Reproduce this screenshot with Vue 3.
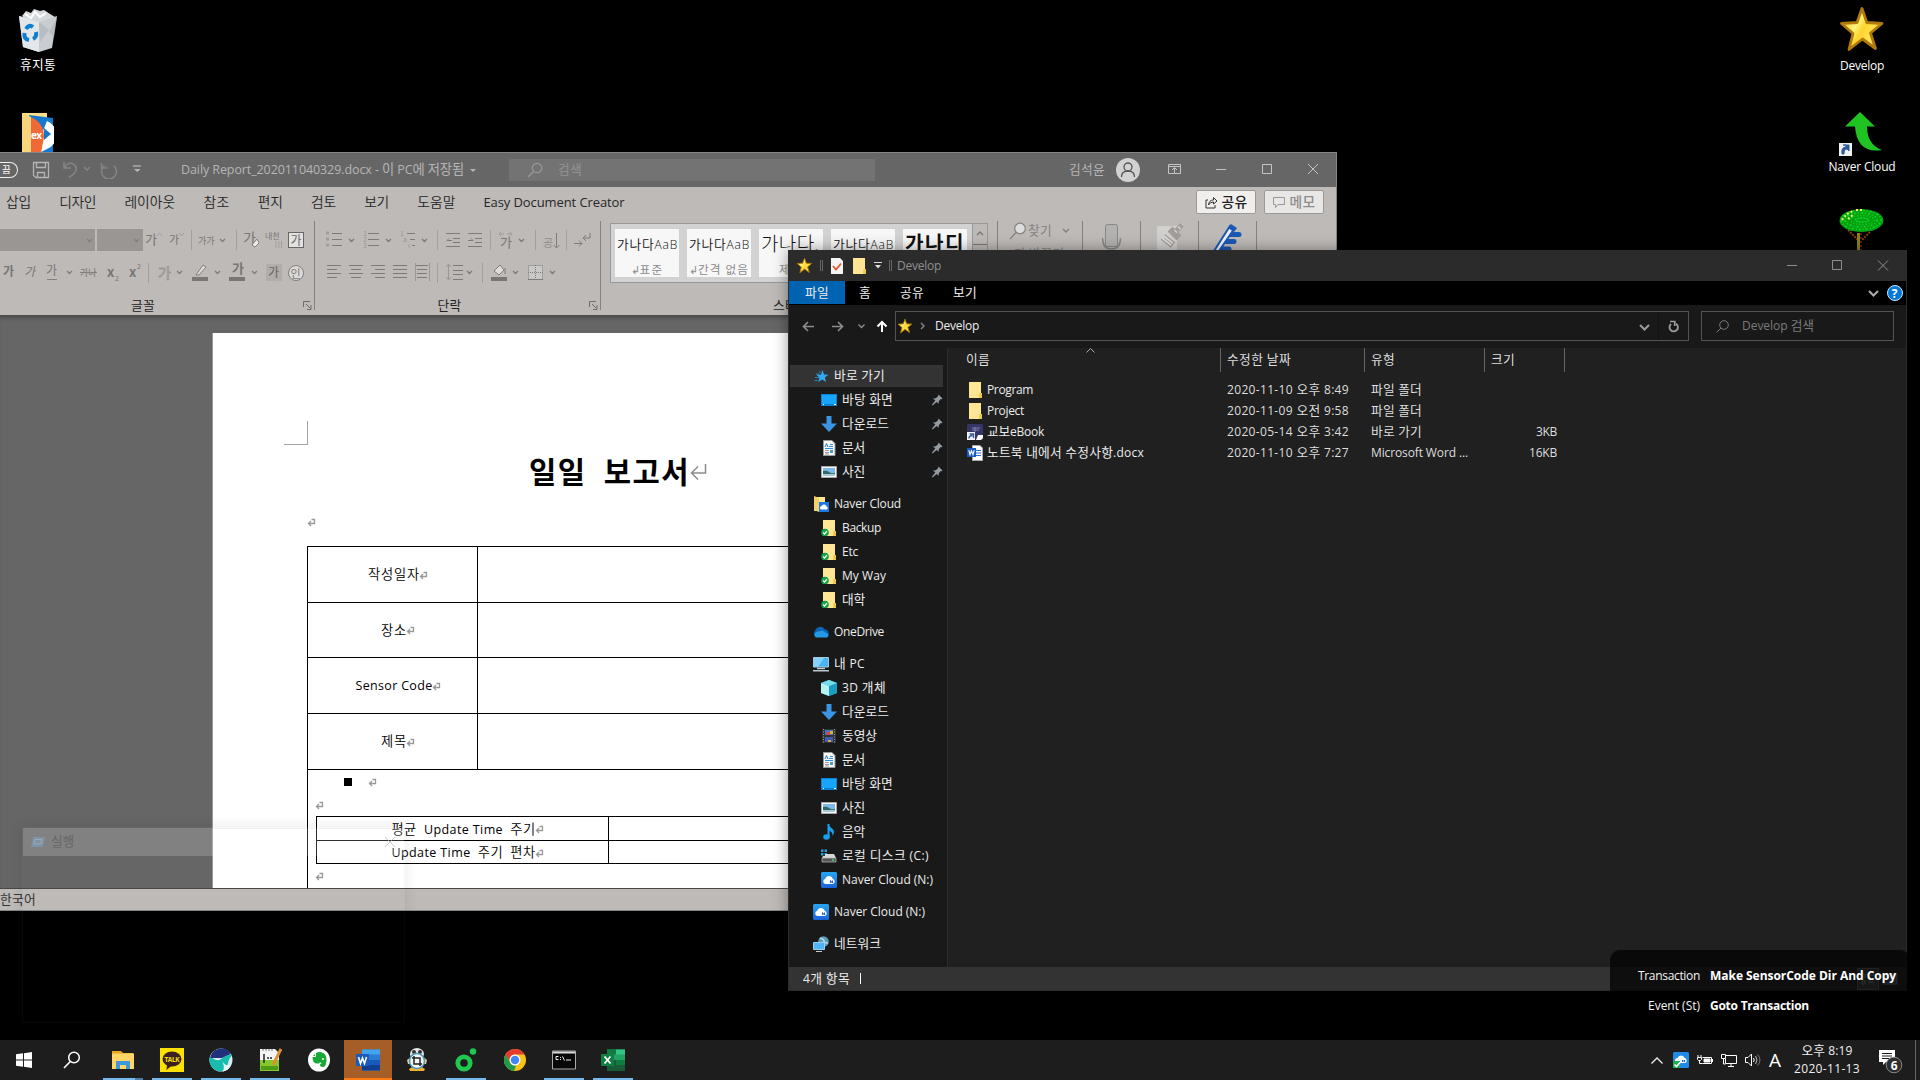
<script setup>
import { h, ref, onMounted, defineComponent } from 'vue'

// Text run: Hangul and Latin parts get their own size; the tracking is fitted to width w.
const T = defineComponent({
  props: { t: String, w: Number },
  setup(p) {
    const el = ref(null)
    onMounted(() => {
      if (!p.w) return
      const now = el.value.getBoundingClientRect().width
      el.value.style.letterSpacing = (p.w - now) / p.t.length + 'px'
    })
    return () => h('span', { ref: el, class: 't' },
      p.t.split(/([가-힣]+)/).filter(Boolean).map(s => /[가-힣]/.test(s) ? h('span', { class: 'ko' }, s) : s))
  }
})

const art = {
  star: [48, '<defs><linearGradient id="sg" x1="0" x2="1" y2=".6"><stop offset="0" stop-color="#ffc814"/><stop offset=".45" stop-color="#fff27a"/><stop offset=".6" stop-color="#ffd52e"/><stop offset="1" stop-color="#fff06a"/></linearGradient></defs><path d="M24 3.500 28.800 17.500 44 18.500 32.500 28 37.500 43.500 24.500 34 11 44.500 15 28.500 3.500 18.500 19 17.500Z" fill="url(#sg)" stroke="#b07a0a" stroke-width="2.800" stroke-linejoin="round"/>'],
  folder: [16, '<path d="M2 0h12v16H2z" fill="#ffe08a"/><path d="M2 0h12v11h-1.500v5H2z" fill="#ffe694"/><path d="M12.500 11H15v5h-3z" fill="#f0c64c"/>'],
  sfolder: [16, '<path d="M2 0h12v16H2z" fill="#ffe694"/><path d="M12.500 11H15v5h-3z" fill="#f0c64c"/><circle cx="4" cy="12.500" r="3.800" fill="#14a04a"/><path d="M2.200 12.500 3.600 14 6 11.200" stroke="#fff" stroke-width="1.300" fill="none"/>'],
  quick: [16, '<path d="M9.500 2l1.500 4.500 4.500.2-3.600 2.900 1.200 4.400-3.900-2.400-4 2.400 1.300-4.300L3.500 6.700 8 6.500z" fill="#34a8f4"/><path d="M1.500 12.500h3M2 9.500h4M3 6h3M6 4h2" stroke="#2088d0"/>'],
  desk: [16, '<path d="M0 2h16v12H0z" fill="#0a84d8"/><path d="M1 3h14v9H1z" fill="#18a4ff"/><path d="M2 12.500h1M13 12.500h2" stroke="#fff"/>'],
  down: [16, '<path d="M5.500 0h5v7.500H16L8 16 0 7.500h5.500z" fill="#3a96e4"/>'],
  doc: [16, '<path d="M2.500.5h8.500l3 3v12H2.500z" fill="#f8f8f8" stroke="#9a9a9a"/><path d="M9 4.500h3M8 6.500h4M4 8.500h8" stroke="#2b8bd8"/><path d="M4 7l1.500-3.500L7 7" stroke="#1f78c0" fill="none"/><path d="M4 10.500h4M4 12.500h4M4 14h4" stroke="#999"/><path d="M9 10h3v3H9z" fill="#4d9ab8"/>'],
  pic: [16, '<path d="M.5 2.500h15v11H.5z" fill="#f6f6f6" stroke="#a8a8a8"/><path d="M2 4h12v8H2z" fill="#7fb8e8"/><path d="M2 7q4-1 6 1t6 1v3H2z" fill="#2d6a6c"/><path d="M2 10h12v2H2z" fill="#a8c8d8"/>'],
  ncf: [16, '<path d="M1 1h11v14H1z" fill="#ffe694"/><path d="M1 0l5 2v14l-5-2z" fill="#f4d06c"/><path d="M6 6h10v10H6z" fill="#1b78e0"/><path d="M8 13.500a1.800 1.800 0 0 1 .5-3.400 2.600 2.600 0 0 1 5 .4 1.600 1.600 0 0 1 .3 3z" fill="#fff"/>'],
  nc: [16, '<defs><linearGradient id="ng" x2="0" y2="1"><stop stop-color="#28a6f0"/><stop offset="1" stop-color="#1c62d8"/></linearGradient></defs><rect width="16" height="16" rx="1.500" fill="url(#ng)"/><path d="M4.500 12a2.700 2.700 0 0 1-.2-5.300 3.800 3.800 0 0 1 7.300 0A2.700 2.700 0 0 1 11.500 12z" fill="#fff"/><path d="M9.500 11V8.500l2 2.500V8.500" stroke="#1c62d8" fill="none"/>'],
  onedrive: [16, '<path d="M3.500 13A3.500 3.500 0 0 1 2 7 5.500 5.500 0 0 1 12 5.500 4 4 0 0 1 13.500 13z" fill="#0c63b8"/><path d="M3 13.500a3.200 3.200 0 0 1 .5-5.500L9 6.500l6 3.500a2.300 2.300 0 0 1-1.300 3.500z" fill="#2499e4"/>'],
  pc: [16, '<path d="M.5 1.500h15v9.500H.5z" fill="#4ab2f8" stroke="#a4c8dc"/><path d="M1 2h10L5 11H1z" fill="#84d0ff"/><path d="M4 12.500h8M0 14.800h16" stroke="#b8c8d0" stroke-width="1.400"/>'],
  cube: [16, '<path d="M8 0l8 3v10l-8 3-8-3V3z" fill="#35bcd8"/><path d="M0 3l8 3v10l-8-3z" fill="#b6f2f4"/><path d="M8 6l8-3v10l-8 3z" fill="#1a9dc0"/><path d="M8 0l8 3-8 3-8-3z" fill="#74dcec"/>'],
  film: [16, '<path d="M1 1h14v14H1z" fill="#333"/><path d="M2.500 1v14M13.500 1v14" stroke="#999" stroke-dasharray="1 1.500"/><path d="M4 2h8v5H4z" fill="#4a70c8"/><path d="M4 9h8v5H4z" fill="#3c5cb4"/><path d="M6 4h3v3H6z" fill="#d84830"/><path d="M9 3h3v3H9z" fill="#d8b030"/><path d="M7 12h3v2H7z" fill="#e0a040"/>'],
  music: [16, '<ellipse cx="5.500" cy="13" rx="3.300" ry="2.700" fill="#18a0f0"/><path d="M7.500 0v13" stroke="#18a0f0" stroke-width="2"/><path d="M8 0c0 4 5 4 5 8q0 2-1.500 4 .5-4-3.500-5.500z" fill="#18a0f0"/>'],
  disk: [16, '<path d="M0 1.500h2.500v2.500H0zM3.500 1.500H6v2.500H3.500zM0 5h2.500v2.500H0zM3.500 5H6v2.500H3.500z" fill="#28a0d8"/><path d="M4 6h9l2 4H1l1-2h2z" fill="#d8d8d8"/><path d="M1 10h14v4H1z" fill="#555" stroke="#bbb" stroke-width=".7"/><path d="M11 12h2" stroke="#30e060" stroke-width="1.500"/>'],
  net: [16, '<circle cx="10.500" cy="5.500" r="5.300" fill="#5c9cb8"/><path d="M7 2q4 1 4 3t4 2" stroke="#b8dcec" stroke-width="1.500" fill="none"/><path d="M.5 6.500h11v7H.5z" fill="#50b4f8" stroke="#9cd0f0"/><path d="M3 15.500h6" stroke="#c8d0d4"/>'],
  pin: [12, '<path d="M7.500 .5 11.500 4.500 10.500 5.200 9.800 5 7.800 7.200 7.600 9.800 5.600 8 1.500 11.500 .8 10.800 4.300 6.600 2 4.500 4.800 4.200 7 2.200z" fill="#929ba2"/>'],
  ebook: [16, '<rect width="16" height="16" rx="1.500" fill="#353566"/><path d="M5 4h8M5 6h7M8 3v5" stroke="#8d90b8" stroke-width=".8"/><path d="M11 11h5v3l-2 2h-5z" fill="#fff"/><path d="M0 8h8v8H0z" fill="#f4f4f8"/><path d="M2 14.500q0-3 3.500-3M2.500 10h4v4" stroke="#335a9c" stroke-width="1.400" fill="none"/>'],
  docx: [16, '<path d="M5.500.5H13l2.500 2.500v12.500h-10z" fill="#fff" stroke="#aaa"/><path d="M9 5.500h5M9 8h5M9 10.500h5" stroke="#2b6cd0" stroke-width="1.200"/><path d="M0 3h9v9H0z" fill="#185abd"/><path d="M1.800 5.200l1.200 4.500 1.500-4 1.500 4 1.200-4.500" stroke="#fff" stroke-width="1.100" fill="none"/>'],
  chk: [16, '<path d="M2 0h9l3 3v13H2z" fill="#f4f4f4"/><path d="M4 8l3 3.500 5-6" stroke="#e0592a" stroke-width="1.800" fill="none"/>'],
  // taskbar
  start: [24, '<path d="M4 6.300 11 5.300v6.200H4zM12 5.200 20 4v7.500h-8zM4 12.500h7v6.200l-7-1zM12 12.500h8V20l-8-1.200z" fill="#fff"/>'],
  find: [24, '<circle cx="14" cy="9.500" r="5.300" fill="none" stroke="#fff" stroke-width="1.500"/><path d="M10.300 13.500 4 20" stroke="#fff" stroke-width="1.600"/>'],
  fexp: [24, '<path d="M1 3h9l2 2h10v3H1z" fill="#e6a81c"/><path d="M1 5.500h22V21H1z" fill="#ffd567"/><path d="M5 13h14v8h-4v-4H9v4H5z" fill="#3d97d8"/>'],
  whale: [24, '<circle cx="12" cy="12" r="11.500" fill="#d8ecf0"/><path d="M1 10A11.500 11.500 0 0 1 22 6L13 10z" fill="#20307c"/><path d="M.500 10c4-2 6 5 11.500 1 4-3 8-5 11-4-2 3-3 4-4 8-1 5-5 8.500-8 8.300A11.500 11.500 0 0 1 .5 10" fill="#18bcae"/><path d="M13 13q4 6 9 4-2 5-8 6.500 2-6-1-10.500" fill="#e6f4f6"/>'],
  note: [24, '<path d="M2 1h15l4 4v18H2z" fill="#f4f4f4"/><path d="M2 12h19v11H2z" fill="#86c82c"/><path d="M3 18h17v4H3z" fill="#4c9c18"/><path d="M6 6v9M9 10h2M12 10h2" stroke="#222" stroke-width="1.500"/><path d="M23 1l-8 16" stroke="#d89030" stroke-width="3"/><path d="M4 2h12" stroke="#777" stroke-dasharray="2 1"/>'],
  ever: [24, '<ellipse cx="12" cy="12" rx="11" ry="11.500" fill="#fff"/><path d="M5 9 9 5q4-2 7 0 3 1 3.500 6 0 7-3 8-3.500.5-3.500-2 0-2 2-1.500-2-2-3.500 0-6 1-6-6.500z" fill="#18a838"/><path d="M5 8.500h3.500V5" stroke="#fff" fill="none"/><circle cx="16" cy="11" r="1" fill="#fff"/>'],
  word: [24, '<path d="M6 1.500h18v21H6z" fill="#2b7cd3"/><path d="M6 1.500h18v5H6z" fill="#41a5ee"/><path d="M6 12h18v5H6z" fill="#185abd"/><path d="M6 17h18v5.500H6z" fill="#103f91"/><rect y="6" width="13" height="12" fill="#185abd"/><path d="M2.500 9l2 6.500L6.500 10l2 5.500 2-6.500" stroke="#fff" stroke-width="1.600" fill="none"/>'],
  cap: [24, '<ellipse cx="12" cy="6" rx="7" ry="6" fill="#e6e6e6"/><circle cx="9" cy="4" r="2" fill="#333"/><circle cx="15" cy="4" r="2" fill="#333"/><path d="M4 21l5-3h6l5 3-1 2H5z" fill="#f0b030"/><path d="M2 12l4-3h12l4 3-1 4H3z" fill="#f0d090"/><circle cx="12" cy="13" r="7.500" fill="#f8f8f8" stroke="#4898c0" stroke-width="1.500"/><path d="M9 8v8h8M7 10h8v8" stroke="#222" stroke-width="1.500" fill="none"/>'],
  oo: [24, '<circle cx="10" cy="15" r="6.200" fill="none" stroke="#20c850" stroke-width="4.800"/><circle cx="19" cy="3.500" r="3.200" fill="#20c850"/>'],
  chrome: [24, '<circle cx="12" cy="12" r="11" fill="#fbc116"/><path d="M12 1a11 11 0 0 1 9.600 5.500H12a5.500 5.500 0 0 0-4.800 8.200L2.400 6.500A11 11 0 0 1 12 1" fill="#e33b2e"/><path d="M2.400 6.500 7.200 14.700A5.500 5.500 0 0 0 13.300 17.300L11 23A11 11 0 0 1 2.400 6.500" fill="#229a4c"/><circle cx="12" cy="12" r="5.500" fill="#fff"/><circle cx="12" cy="12" r="4.200" fill="#4285f4"/>'],
  cmd: [24, '<path d="M.5 3h23v18H.5z" fill="#080808" stroke="#aaa"/><path d="M1 3.500h22v2H1z" fill="#ddd"/><path d="M6.500 8.500H4v3h2.500M8.500 9v1M8.500 11v1M10.500 8.500l2 4M14 12h5" stroke="#eee" fill="none"/>'],
  excel: [24, '<path d="M6 1.500h18v21H6z" fill="#21a366"/><path d="M6 1.500h9v5H6z" fill="#107c41"/><path d="M15 1.500h9v5h-9z" fill="#33c481"/><path d="M6 12h18v10.500H6z" fill="#185c37"/><path d="M15 12h9v5h-9z" fill="#107c41"/><rect y="6" width="13" height="12" fill="#107c41"/><path d="M3.500 8.500l6 7M9.500 8.500l-6 7" stroke="#fff" stroke-width="1.800"/>']
}
const Ico = (p) => h('svg', { viewBox: `0 0 ${art[p.n][0]} ${art[p.n][0]}`, width: p.s || 16, height: p.s || 16, class: 'ico', innerHTML: art[p.n][1] })
Ico.props = ['n', 's']

const tabs = [['삽입', 25], ['디자인', 37], ['레이아웃', 51], ['참조', 26], ['편지', 25], ['검토', 25], ['보기', 25], ['도움말', 38], ['Easy Document Creator', 141]]
const nav = [
  [['quick', '바로 가기', 51], ['desk', '바탕 화면', 51, 1], ['down', '다운로드', 47, 1], ['doc', '문서', 23, 1], ['pic', '사진', 23, 1]],
  [['ncf', 'Naver Cloud', 67], ['sfolder', 'Backup', 39], ['sfolder', 'Etc', 16], ['sfolder', 'My Way', 44], ['sfolder', '대학', 23]],
  [['onedrive', 'OneDrive', 50]],
  [['pc', '내 PC', 31], ['cube', '3D 개체', 44], ['down', '다운로드', 47], ['film', '동영상', 35], ['doc', '문서', 23], ['desk', '바탕 화면', 51], ['pic', '사진', 23], ['music', '음악', 23], ['disk', '로컬 디스크 (C:)', 87], ['nc', 'Naver Cloud (N:)', 91]],
  [['nc', 'Naver Cloud (N:)', 91]],
  [['net', '네트워크', 47]]
]
const files = [
  ['folder', 'Program', 46, '2020-11-10 오후 8:49', '파일 폴더', 51, '', 0],
  ['folder', 'Project', 37, '2020-11-09 오전 9:58', '파일 폴더', 51, '', 0],
  ['ebook', '교보eBook', 57, '2020-05-14 오후 3:42', '바로 가기', 51, '3KB', 21],
  ['docx', '노트북 내에서 수정사항.docx', 157, '2020-11-10 오후 7:27', 'Microsoft Word ...', 97, '16KB', 28]
]
const styles = [['가나다AaB', '표준', 0], ['가나다AaB', '간격 없음', 0], ['가나다.', '제목', 1], ['가나다AaB', '부제', 0], ['가나디', '강조', 2]]
const rows = [['작성일자', 52], ['장소', 26], ['Sensor Code', 77], ['제목', 26]]
const tasks = [['start', 0], ['find', 0], ['fexp', 1], ['talk', 1], ['whale', 1], ['note', 1], ['ever', 0], ['word', 2], ['cap', 0], ['oo', 1], ['chrome', 0], ['cmd', 1], ['excel', 1]]
const Ret = () => h('svg', { width: 9, height: 9, viewBox: '0 0 9 9', class: 'ret', innerHTML: '<path d="M4.500 1.500H7.500V5.500H1.500M4 3 1.500 5.500 4 8" fill="none" stroke="#999" stroke-width="1.300"/>' })
</script>

<template>
  <div class="desktop">
    <!-- desktop icons -->
    <div class="dicon recycle">
      <svg width="38" height="44" viewBox="0 0 38 44"><path d="M3 7 7 2l5 2 3-4 6 2 4-1 6 4 5 3-8 5H9z" fill="#d6d9dc" /><path d="M6 5l6 4 4-6 5 5 6-4" stroke="#fff" stroke-width="2" fill="none" /><path d="M0 7l20 6 18-6-5 32-13 4-16-5z" fill="#c9cdd1" /><path d="M0 7l20 6v30L4 38z" fill="#e4e7ea" /><path d="M20 13l10 8-9 12zM38 8l-8 15 5 6z" fill="#aab0b6" opacity=".55" /><path d="M7 20q3-5 7-2M5.500 24q-1 6 4.500 7M17 23q1 5-3 7" stroke="#0f7fd4" stroke-width="4" fill="none" /></svg>
      <T t="휴지통" :w="36" />
    </div>
    <svg class="pfolder" width="32" height="40" viewBox="0 0 32 40"><path d="M0 0h25v40H0z" fill="#ffe08c" /><path d="M7 2l24 3v35H10z" fill="#1578cc" /><path d="M25 8a15 15 0 0 1 0 28l-8 4h-5z" fill="#fff" /><path d="M22 15l7 6-7 6z" fill="#1578cc" /><path d="M9 4q13 6 13 20l-3 16H9z" fill="#f06a38" /><path d="M0 0l9 4v36H4L0 37z" fill="#f8d47c" /><text x="9" y="26" font-size="10" font-weight="bold" fill="#fff" textLength="11">ex</text></svg>
    <div class="dicon develop"><Ico n="star" :s="48" /><T t="Develop" :w="44" /></div>
    <div class="dicon naver">
      <svg width="48" height="48" viewBox="0 0 48 48"><path d="M22 2 37 16.500h-8q0 18 15 23.500-25 4-27-23.500H7z" fill="#20c422" /><path d="M1 33h13v13H1z" fill="#f0f0f0" /><path d="M4 44q-1-7 4-7v-2H5h6v6l-2-2q-3 0-3 5z" fill="#2f5a9c" stroke="#2f5a9c" /></svg>
      <T t="Naver Cloud" :w="67" />
    </div>
    <svg class="tree" width="48" height="43" viewBox="0 0 48 43"><path d="M10 22l10 10M32 24l-8 8" stroke="#8a3c0c" stroke-width="2" stroke-dasharray="2 1" /><path d="M19 25h3v18h-3z" fill="#8a8212" /><path d="M23 25v18" stroke="#6c1408" stroke-dasharray="2 2" stroke-width="2" /><ellipse cx="23.500" cy="12.500" rx="22" ry="11.500" fill="#04a010" /><g fill="none" stroke="#10d828" stroke-width="1.500"><ellipse cx="23" cy="12" rx="20" ry="9.500" stroke-dasharray="1 2 2 2" /><ellipse cx="23" cy="12" rx="16" ry="7" stroke-dasharray="2 2 1 2" /><ellipse cx="24" cy="12" rx="12" ry="4.500" stroke-dasharray="1 2" /><ellipse cx="24" cy="12" rx="7" ry="2" stroke-dasharray="2 1" /></g><path d="M4 12l4-5M9 6l6-3M18 2h8M10 11l5-4" stroke="#ecf868" stroke-width="2" stroke-dasharray="2 2" /></svg>

    <!-- word processor -->
    <section class="word">
      <header class="wtitle">
        <span class="pill"><T t="끔" :w="11" /></span>
        <svg width="120" height="18" viewBox="0 0 120 18" fill="none" stroke="#b5b5b5"><path d="M3.500 1.500h15v15H6l-2.500-2zM6.500 1.500v5h9v-5M7.500 16.500v-5h7v5" stroke-width="1.300" /><path d="M34 1v6h7M34.500 7Q37 1.500 42 2.500q5 2 4 7-1 3-7 7" stroke="#858585" stroke-width="1.500" /><path d="M54 6l3 3 3-3" stroke="#858585" stroke-width="1.400" /><path d="M74.500 4a7.500 7.500 0 1 0 9 0M71.500 1.500v5h6" stroke="#858585" stroke-width="1.500" transform="translate(0 .5)" /><path d="M103 5h8" stroke-width="1.300" /><path d="M104.500 8l2.800 2.800L110 8" fill="#b5b5b5" /></svg>
        <T class="wname" t="Daily Report_202011040329.docx - 이 PC에 저장됨" :w="283" />
        <i class="tri"></i>
        <div class="wsearch"><svg width="16" height="16" viewBox="0 0 16 16" fill="none" stroke="#999" stroke-width="1.200"><circle cx="10" cy="6" r="4.700" /><path d="M6.500 9.500 1 15" /></svg><T t="검색" :w="24" /></div>
        <T class="wuser" t="김석윤" :w="36" />
        <svg class="wctl" width="210" height="26" viewBox="0 0 210 26" fill="none" stroke="#c4c4c4"><circle cx="12" cy="13" r="12" fill="#d2d2d2" stroke="none" /><circle cx="12" cy="10" r="4" stroke="#555" stroke-width="1.300" /><path d="M5.500 20q0-6 6.500-6t6.500 6" stroke="#555" stroke-width="1.300" /><path d="M52.500 7.500h12v9h-12zM52.500 9.500h12M58.500 16v-5M56 13l2.500-2.500L61 13" /><path d="M100 12.500h10M146.500 7.500h9v9h-9zM192 7l10 10M202 7l-10 10" /></svg>
      </header>
      <nav class="wtabs">
        <T v-for="t in tabs" :key="t[0]" :t="t[0]" :w="t[1]" />
        <div class="wbtns">
          <button class="share"><svg width="13" height="13" viewBox="0 0 13 13" fill="none" stroke="#333"><path d="M3 4H1v8h9V9M3.500 9q.5-5 5-5V1.500L12 5 8.500 8V6Q5 6 3.500 9" /></svg><T t="공유" :w="26" /></button>
          <button class="memo"><svg width="13" height="13" viewBox="0 0 13 13" fill="none" stroke="#999"><path d="M.5 1.500h11v7H5l-2.500 3v-3h-2z" /></svg><T t="메모" :w="26" /></button>
        </div>
      </nav>
      <div class="ribbon">
        <div class="grp gfont">
          <svg width="314" height="66" viewBox="0 0 314 66" fill="none" stroke="#827f7d" class="strip">
            <path d="M0 8h95v22H0zM97 8h46v22H97z" fill="#999694" stroke="none" />
            <path d="M87 18l2.500 2.500L92 18M134 18l2.500 2.500L139 18M220 18l2.500 2.500L225 18M67 50l2.500 2.500L72 50M177 50l2.500 2.500L182 50M215 50l2.500 2.500L220 50M252 50l2.500 2.500L257 50" stroke-width="1.400" />
            <path d="M157 15l2.500-3 2.500 3M179 12l2.500 3 2.500-3M276 20v7M279 20v7M281.500 20v7" stroke="#a09d9b" />
            <path d="M191.500 9v20M236.500 9v20M148.500 42v20" stroke="#a29f9d" />
            <g fill="#797674" stroke="none" font-size="13"><text x="145" y="23">가</text><text x="169" y="23" font-size="11">가</text><text x="198" y="23" font-size="9">가가</text><text x="243" y="22" font-size="14">가</text><text x="265" y="18" font-size="8">내천</text><text x="3" y="55" font-size="12" font-weight="bold">가</text><text x="24" y="55" font-size="12" transform="skewX(-12) translate(12)">가</text><text x="46" y="54" font-size="12">가</text><text x="80" y="55" font-size="9">가나</text><text x="107" y="56" font-size="13" font-weight="bold">x</text><text x="115" y="60" font-size="7">2</text><text x="129" y="56" font-size="13" font-weight="bold">x</text><text x="137" y="48" font-size="7">2</text><text x="232" y="52" font-weight="bold">가</text></g>
            <path d="M47 58.500h10M80 51.500h17" /><text x="158" y="57" font-size="14" fill="#ddd" stroke="#8a8785" stroke-width=".7">가</text>
            <path d="M252 24l5-6 2 4-4 4z" fill="#eee" /><rect x="288.500" y="11.500" width="15" height="15" fill="#e4e2e0" stroke="#666" /><text x="290.500" y="24" font-size="12" fill="#666" stroke="none">가</text>
            <path d="M192 56h16v4h-16zM229 56h16v4h-16z" fill="#797674" stroke="none" /><path d="M196 54l7-10 3 2-7 8z" fill="#ddd" />
            <path d="M266 43h16v17h-16z" fill="#b0adab" stroke="none" /><text x="268" y="56" font-size="12" fill="#666" stroke="none">가</text>
            <circle cx="296" cy="52" r="7.500" fill="#dcdad8" /><text x="290.500" y="56.500" font-size="11" fill="#777" stroke="none">인</text>
          </svg>
          <div class="gl"><T t="글꼴" :w="24" /></div>
          <svg class="launch" width="9" height="9" viewBox="0 0 9 9" fill="none" stroke="#6f6c6a"><path d="M.5 6V.5H7M3 3l4.500 4.500M8 4v4.500H4" /></svg>
        </div>
        <div class="grp gpara">
          <svg width="285" height="66" viewBox="0 0 285 66" fill="none" stroke="#7e7b79" class="strip">
            <path d="M11 12h3M11 18h3M11 24h3" stroke-width="3" stroke="#a09d9b" /><path d="M17 12.500h10M17 18.500h10M17 24.500h10M53 12.500h11M53 18.500h11M53 24.500h11M92 12.500h8M95 18.500h5M97 24.500h3" />
            <g fill="#9a9795" stroke="none" font-size="7"><text x="48" y="15">1</text><text x="48" y="21">2</text><text x="48" y="27">3</text><text x="85" y="15">1</text><text x="88" y="21">a</text><text x="93" y="27">i</text></g>
            <path d="M34 18l2.500 2.500L39 18M71 18l2.500 2.500L76 18M107 18l2.500 2.500L112 18M204 18l2.500 2.500L209 18M152 50l2.500 2.500L157 50M198 50l2.500 2.500L203 50M235 50l2.500 2.500L240 50" stroke-width="1.400" />
            <path d="M122.500 9v20M175.500 9v20M220.500 9v20M251.500 9v20M122.500 42v20M167.500 42v20" stroke="#a29f9d" />
            <path d="M131 12.500h14M138 17.500h7M138 21.500h7M131 25.500h14M137 19.500h-5l2-2M153 12.500h14M160 17.500h7M160 21.500h7M153 25.500h14M153 19.500h5l-2-2" />
            <path d="M184 13h5M192 13h5M186 11l-2 2 2 2M195 11l2 2-2 2" stroke="#a09d9b" /><text x="185" y="26" font-size="13" fill="#797674" stroke="none">가</text>
            <text x="228" y="26" font-size="11" fill="#8f8c8a" stroke="none">공</text><path d="M241.500 12v15M238.500 24l3 3 3-3" />
            <path d="M275 12v5h-7l3-3M268 17l3 3M259 22.500h8l-3-3M267 22.500l-3 3" />
            <path d="M12 44.500h14M12 48.500h10M12 52.500h14M12 56.500h10M34 44.500h14M36 48.500h10M34 52.500h14M36 56.500h10M56 44.500h14M60 48.500h10M56 52.500h14M60 56.500h10M78 44.500h14M78 48.500h14M78 52.500h14M78 56.500h14M102 48.500h10M102 52.500h10M102 56.500h10M101 44.500h12" /><path d="M100.500 42v18M114.500 42v18M133.500 44v14M131 46l2.500-3 2.500 3M131 56l2.500 3 2.500-3" stroke="#9a9795" /><path d="M138 44.500h10M138 49.500h10M138 53.500h10M138 58.500h10" />
            <path d="M176 56h16v4h-16z" fill="#797674" stroke="none" /><path d="M179 50l6-6 4 5-5 5zM190 47v6" fill="#ddd" /><rect x="213.500" y="44.500" width="14" height="14" stroke-dasharray="1 1" fill="#cac8c6" /><path d="M213 51.500h15M220.500 44v15" stroke-dasharray="1 1" /><path d="M213 58.500h15" />
          </svg>
          <div class="gl"><T t="단락" :w="24" /></div>
          <svg class="launch" width="9" height="9" viewBox="0 0 9 9" fill="none" stroke="#6f6c6a"><path d="M.5 6V.5H7M3 3l4.500 4.500M8 4v4.500H4" /></svg>
        </div>
        <div class="grp gstyle">
          <div class="gallery">
            <div v-for="(s, i) in styles" :key="i" class="tile" :class="'k' + s[2]"><div class="prev"><T :t="s[0]" :w="[61, 61, 58, 61, 60][i]" /></div><div class="tn">{{ i < 2 ? '↲ ' : '' }}<T :t="s[1]" :w="i === 1 ? 51 : 24" /></div></div>
            <div class="scr"><svg width="14" height="60" viewBox="0 0 14 60" fill="none" stroke="#777"><path d="M4 11l3-3 3 3" stroke-width="1.400" /><path d="M0 20.500h14" /></svg></div>
          </div>
          <div class="gl"><T t="스타일" :w="36" /></div>
        </div>
        <div class="grp gfind">
          <div class="fl"><svg width="18" height="18" viewBox="0 0 18 18" fill="#ddd" stroke="#85827f" stroke-width="1.200"><circle cx="11" cy="6.500" r="5.300" /><path d="M7 10.500 1 17" /></svg><T t="찾기" :w="24" /><svg width="8" height="6" viewBox="0 0 8 6" fill="none" stroke="#827f7d" stroke-width="1.400"><path d="M1 1l3 3 3-3" /></svg></div>
          <div class="fl two"><T t="가 바꾸기" :w="50" /></div>
        </div>
        <div class="grp g58"><svg width="20" height="28" viewBox="0 0 20 28" fill="none" stroke="#8a8785"><rect x="3.500" y="1.500" width="12" height="22" rx="2" fill="#b4b2b1" /><path d="M.5 15q0 11 9 11t9-11" stroke-width="1.500" /></svg></div>
        <div class="grp g58"><svg width="28" height="28" viewBox="0 0 28 28" fill="#d2d0cf"><path d="M1 3h20v25H1z" /><path d="M7 14l10 8M14 6l9 9" stroke="#a09d9b" stroke-width="7" /><path d="M7 14l9 7.300" stroke="#dcdad9" stroke-width="4.500" /><path d="M8 15l8 6" stroke="#a09d9b" /><path d="M18 10l8-8" stroke="#a09d9b" stroke-width="5" /><path d="M18.500 7l2.500 2.500M22 3.500l2.500 2.500" stroke="#dcdad9" stroke-width="1.200" /></svg></div>
        <div class="grp g58"><svg width="32" height="28" viewBox="0 0 32 28"><path d="M16 11.500h11M14 18.500h8M11 26h6" stroke="#1c58b4" stroke-width="5" stroke-linecap="round" /><path d="M2 28 18 3l4 3L7 28z" fill="#eef6ff" stroke="#1c58b4" stroke-width="2" /><path d="M16 5l3-4 6 4-3 4z" fill="#1c58b4" /></svg></div>
      </div>
      <div class="canvas">
        <article class="page">
          <div class="corner"></div>
          <h1><T t="일일  보고서" :w="161" /><svg width="17" height="18" viewBox="0 0 17 18" fill="none" stroke="#8c8c8c" stroke-width="1.500"><path d="M15.500 1v9H1.500M8 3.500 1.500 10 8 16.500" /></svg></h1>
          <p class="empty"><Ret /></p>
          <div class="tbl">
            <div v-for="r in rows" :key="r[0]" class="tr"><div class="td"><T :t="r[0]" :w="r[1]" /><Ret /></div></div>
            <div class="big">
              <div class="bul"><i></i><Ret /></div>
              <div class="r2"><Ret /></div>
              <div class="inner">
                <div class="ir"><div class="ic"><T t="평균  Update Time  주기" :w="144" /><Ret /></div></div>
                <div class="ir"><div class="ic"><T t="Update Time  주기  편차" :w="144" /><Ret /></div></div>
              </div>
              <div class="r3"><Ret /></div>
            </div>
          </div>
        </article>
      </div>
      <footer class="wstatus"><T t="한국어" :w="36" /></footer>
    </section>

    <!-- fading run dialog -->
    <section class="run">
      <header><svg width="14" height="10" viewBox="0 0 14 10"><path d="M2 0h12l-2 10H0z" fill="#7d93a8" /><path d="M4 2.500h7L10 7H3z" fill="none" stroke="#a2a8ae" /></svg><T t="실행" :w="23" /><svg class="rx" width="10" height="10" viewBox="0 0 10 10" stroke="#aaa" opacity=".6"><path d="M0 0l10 10M10 0 0 10" /></svg></header>
    </section>

    <!-- file explorer -->
    <section class="exp">
      <header class="etitle">
        <Ico n="star" :s="17" /><i class="bar"></i><Ico n="chk" /><Ico n="folder" />
        <svg width="8" height="8" viewBox="0 0 8 8"><path d="M0 .5h8" stroke="#ddd" /><path d="M1 3h6L4 6.500z" fill="#ddd" /></svg><i class="bar"></i>
        <T t="Develop" :w="44" />
        <svg class="ectl" width="102" height="11" viewBox="0 0 102 11" fill="none" stroke="#8e8e8e"><path d="M0 5.500h10M45.500.5h9v9h-9zM91 .5l10 10M101 .5l-10 10" /></svg>
      </header>
      <nav class="etabs">
        <span class="file"><T t="파일" :w="24" /></span><T t="홈" :w="12" /><T t="공유" :w="24" /><T t="보기" :w="24" />
        <svg width="42" height="18" viewBox="0 0 42 18"><path d="M2 7l4.500 4.500L11 7" fill="none" stroke="#aaa" stroke-width="2.200" /><circle cx="28" cy="9" r="7.500" fill="#0078d7" stroke="#cfe6f8" /><text x="24.800" y="13.500" font-size="12" font-weight="bold" fill="#fff">?</text></svg>
      </nav>
      <div class="eaddr">
        <svg class="arr" width="88" height="14" viewBox="0 0 88 14" fill="none" stroke="#8c8c8c" stroke-width="1.700"><path d="M13 7.500H2.500M7 3 2.500 7.500 7 12M31 7.500h10.500M37 3l4.500 4.500L37 12" /><path d="M57.500 5.500l3 3 3-3" stroke-width="1.400" /><path d="M81 13V3M76.500 7.500 81 3 85.500 7.500" stroke="#fff" stroke-width="2" /></svg>
        <div class="abox"><Ico n="star" :s="16" /><svg width="5" height="8" viewBox="0 0 5 8" fill="none" stroke="#888" stroke-width="1.400"><path d="M1 1l3 3-3 3" /></svg><T t="Develop" :w="44" /><svg class="rf" width="44" height="28" viewBox="0 0 44 28" fill="none"><path d="M3 13l4.500 4.500L12 13" stroke="#9a9a9a" stroke-width="2" /><path d="M21.500 0v28" stroke="#111" /><path d="M39 11.700a4.200 4.200 0 1 1-5 .3" stroke="#9a9a9a" stroke-width="1.900" /><path d="M33 9.500h4.800v4.500" stroke="#9a9a9a" stroke-width="1.700" /></svg></div>
        <div class="sbox"><svg width="13" height="13" viewBox="0 0 13 13" fill="none" stroke="#7a7a7a"><circle cx="8" cy="5" r="4.300" /><path d="M5 8 .5 12.500" /></svg><T t="Develop 검색" :w="72" /></div>
      </div>
      <div class="ebody">
        <aside>
          <div v-for="(g, i) in nav" :key="i" class="ng">
            <div v-for="(n, j) in g" :key="j" class="nr" :class="{ child: j > 0, sel: !i && !j }"><Ico :n="n[0]" /><T :t="n[1]" :w="n[2]" /><Ico v-if="n[3]" class="pinned" n="pin" :s="12" /></div>
          </div>
        </aside>
        <main>
          <div class="hd"><div class="h1"><T t="이름" :w="24" /><svg class="sort" width="9" height="5" viewBox="0 0 9 5" fill="none" stroke="#aaa"><path d="M.5 4.500l4-4 4 4" /></svg></div><div><T t="수정한 날짜" :w="64" /></div><div><T t="유형" :w="24" /></div><div><T t="크기" :w="24" /></div></div>
          <div v-for="f in files" :key="f[1]" class="fr"><div class="nm"><Ico :n="f[0]" /><T :t="f[1]" :w="f[2]" /></div><div class="g"><T :t="f[3]" :w="122" /></div><div class="g"><T :t="f[4]" :w="f[5]" /></div><div class="g sz"><T v-if="f[6]" :t="f[6]" :w="f[7]" /></div></div>
        </main>
      </div>
      <footer class="est"><T t="4개 항목" :w="47" /><i></i><svg width="44" height="22" viewBox="0 0 44 22" fill="none" stroke="#aaa"><rect x=".5" y=".5" width="21" height="21" stroke="#777" fill="#555" /><path d="M5 6h3v3H5zM5 13h3v3H5zM11 7h6M11 14h6" /><path d="M26 6h14v10H26z" fill="#567" stroke="#89a" /></svg></footer>
    </section>

    <!-- macro overlay -->
    <section class="osd">
      <span class="k"><T t="Transaction" :w="62" /></span><b><T t="Make SensorCode Dir And Copy" :w="186" /></b>
      <span class="k"><T t="Event (St)" :w="52" /></span><b><T t="Goto Transaction" :w="99" /></b>
    </section>

    <!-- taskbar -->
    <footer class="task">
      <div v-for="t in tasks" :key="t[0]" class="tb" :class="{ on: t[1] === 1, cur: t[1] === 2, multi: t[0] === 'fexp' }">
        <svg v-if="t[0] === 'talk'" width="24" height="24" viewBox="0 0 24 24"><path d="M0 0h24v24H0z" fill="#fae100" /><ellipse cx="12" cy="11" rx="9.500" ry="7.500" fill="#3a2020" /><path d="M7 16l-.5 6 6-5z" fill="#3a2020" /><text x="4.500" y="13.500" font-size="6.500" font-weight="bold" fill="#fae100" textLength="15">TALK</text></svg>
        <Ico v-else :n="t[0]" :s="24" />
      </div>
      <div class="tray">
        <svg width="12" height="7" viewBox="0 0 12 7" fill="none" stroke="#eee" stroke-width="1.300"><path d="M.5 6.500 6 1l5.500 5.500" /></svg>
        <svg width="16" height="16" viewBox="0 0 16 16"><rect width="16" height="16" rx="1.500" fill="#1f8ae8" /><path d="M4.500 11a2.500 2.500 0 0 1 0-5 3.800 3.800 0 0 1 7.200 0A2.600 2.600 0 0 1 12 11z" fill="#fff" /><path d="M9.500 10V8l2 2V8" stroke="#1c62d8" fill="none" /><path d="M0 9l7 0v7H0z" fill="#18b050" /><path d="M1.500 12.500l2 2 3.500-4" stroke="#fff" stroke-width="1.600" fill="none" /></svg>
        <svg width="16" height="16" viewBox="0 0 16 16" fill="none" stroke="#fff"><path d="M5.500 5.500h9v6h-9M15.500 7v3" /><path d="M7 7h6v3H7z" fill="#fff" /><path d="M1 3v2M4 3v2M.5 5.500h4v2l-1 1h-2l-1-1zM2.500 8v3.500h3" /></svg>
        <svg width="16" height="16" viewBox="0 0 16 16" fill="none" stroke="#fff"><path d="M5 3.500h10.500v8h-11V7M7 14.500h6M10 12v2M.5 2.500h4v4h-4zM2.500 7v5h2" /></svg>
        <svg width="16" height="16" viewBox="0 0 16 16" fill="none" stroke="#fff"><path d="M.5 5.500H3L6.500 2v12L3 10.500H.5zM8.500 6q1.500 2 0 4" /><path d="M10.500 4q3 4 0 8" stroke="#bbb" /><path d="M12.500 2.500q5 5.500 0 11" stroke="#777" /></svg>
        <span class="ime">A</span>
        <div class="clock"><T t="오후 8:19" :w="51" /><T t="2020-11-13" :w="66" /></div>
        <svg class="noti" width="26" height="26" viewBox="0 0 26 26"><path d="M0 2h16v12H7l-3 3v-3H0z" fill="#fff" /><path d="M3 5.500h10M3 8h10M3 10.500h7" stroke="#1c1c1c" /><circle cx="15" cy="17" r="7.800" fill="#2c2c2c" stroke="#888" /><text x="11.800" y="21.500" font-size="12" font-weight="bold" fill="#fff">6</text></svg>
        <i class="edge"></i>
      </div>
    </footer>
  </div>
</template>

<style>
html, body { background: #000; overflow: hidden; }
.t { display: inline-block; white-space: pre; flex: none; line-height: 18px; }
.t .ko { font-size: 1.06em; line-height: 1; }
.ico, .ret { display: block; flex: none; }
.ret { display: inline-block; }
.td .ko, .ic .ko, .wtabs > .t .ko { font-weight: 350; }
</style>
<style scoped>
.desktop { position: relative; width: 1920px; height: 1080px; background: #000; overflow: hidden; font: 12px/18px "Open Sans", "Noto Sans CJK KR", sans-serif; color: #fff; }
.desktop svg { display: block; flex: none; }
.dicon { position: absolute; display: flex; flex-direction: column; align-items: center; gap: 5px; }
.recycle { left: 8px; top: 9px; width: 60px; gap: 3px; }
.develop { left: 1822px; top: 5px; width: 80px; gap: 4px; }
.naver { left: 1822px; top: 110px; width: 80px; gap: 0; }
.pfolder { position: absolute; left: 22px; top: 113px; }
.tree { position: absolute; left: 1838px; top: 208px; }

.word { position: absolute; left: 0; top: 152px; width: 1337px; height: 759px; box-sizing: border-box; border: solid #868686; border-width: 1px 1px 1px 0; background: #bebab7; display: flex; flex-direction: column; }
.wtitle { height: 34px; background: #666; display: flex; align-items: center; flex: none; color: #b5b5b5; }
.pill { width: 18px; height: 16px; border: 1.500px solid #eee; border-left: 0; border-radius: 0 9px 9px 0; color: #fff; font-size: 9px; display: flex; align-items: center; box-sizing: border-box; padding-left: 2px; margin-right: 12px; }
.wname { margin-left: 31px; font-size: 12.500px; }
.tri { border: 3px solid transparent; border-top: 3px solid #b5b5b5; border-bottom: 0; margin-left: 6px; }
.wsearch { width: 366px; height: 22px; background: #737373; margin-left: 33px; display: flex; align-items: center; box-sizing: border-box; padding-left: 18px; gap: 15px; color: #939393; }
.wuser { margin-left: 194px; }
.wctl { margin-left: 11px; }
.wtabs { height: 30px; flex: none; display: flex; align-items: center; padding-left: 6px; color: #262626; font-size: 13px; gap: 28.200px; }
.wbtns { margin-left: auto; display: flex; gap: 8px; padding-right: 12px; }
.wbtns button { width: 60px; height: 24px; border: 1px solid #9c9a98; border-radius: 2px; background: #f1efee; padding: 0; font: 500 13px "Open Sans", "Noto Sans CJK KR", sans-serif; display: flex; align-items: center; justify-content: center; gap: 4px; color: #222; }
.wbtns .memo { background: #e9e7e6; color: #8d8d8d; }
.ribbon { height: 98px; flex: none; display: flex; padding-top: 0; }
.grp { height: 89px; margin-top: 4px; border-right: 1px solid #858280; box-sizing: border-box; flex: none; position: relative; display: flex; flex-direction: column; justify-content: space-between; color: #222; }
.gfont { width: 315px; } .gpara { width: 286px; } .gstyle { width: 397px; } .gfind { width: 85px; justify-content: flex-start; }
.g58 { width: 58px; align-items: center; padding-top: 2px; }
.strip { margin-top: 0; font-family: "Noto Sans CJK KR", sans-serif; }
.gl { display: flex; justify-content: center; height: 9px; align-items: center; }
.gfont .gl { padding-right: 28px; }
.gpara .gl { padding-right: 16px; }
.gstyle .gl { padding-right: 16px; }
.launch { position: absolute; right: 2px; bottom: 0; }
.gallery { margin: 2px 0 0 9px; width: 378px; height: 60px; box-sizing: border-box; border: 1px solid #999; background: #d2d2d2; display: flex; gap: 8px; padding: 5px 0 5px 4px; }
.tile { width: 64px; height: 48px; background: #f7f7f7; color: #111; overflow: hidden; display: flex; flex-direction: column; justify-content: space-between; flex: none; }
.prev { padding: 7px 0 0 2px; font-size: 12px; width: 62px; height: 20px; font-weight: 350; }
.k1 .prev { font-size: 18px; padding-top: 6px; font-weight: 300; } .k2 .prev { font-size: 19px; font-weight: 700; padding-top: 4px; }
.tn { color: #8c8c8c; font-size: 11px; text-align: center; height: 15px; line-height: 14px; white-space: nowrap; display: flex; justify-content: center; align-items: center; }
.scr { margin: -5px 0 -5px -3px; width: 14px; border-left: 1px solid #999; background: #bebab7; overflow: hidden; }
.fl { display: flex; align-items: center; padding: 1px 0 0 11px; gap: 1px; color: #85827f; }
.fl svg:last-child { margin-left: 9px; }
.fl.two { padding: 5px 0 0 16px; }

.canvas { flex: 1; background: #666; box-shadow: inset 0 5px 5px -3px #444; overflow: hidden; border-bottom: 1px solid #484848; }
.page { margin: 18px 0 0 212px; width: 900px; height: 600px; background: #fff; border-left: 1px solid #999; box-sizing: border-box; color: #000; display: flex; flex-direction: column; }
.corner { width: 23px; height: 23px; border: solid #a5a5a5; border-width: 0 1px 1px 0; margin: 88px 0 0 71px; flex: none; }
h1 { margin: 10px 0 0 316px; height: 34px; display: flex; align-items: center; gap: 0; font-size: 28px; font-weight: 700; flex: none; }
.empty { margin: 29px 0 0 94px; height: 16px; line-height: 14px; flex: none; }
.tbl { margin: 12px 0 0 94px; border: solid #000; border-width: 1px 0 0 1px; width: 700px; flex: none; }
.tr { height: 56px; box-sizing: border-box; border-bottom: 1px solid #000; display: flex; }
.tr:nth-child(2) { height: 55px; }
.td { border-right: 1px solid #000; display: flex; align-items: center; justify-content: center; padding: 1px 0 0 11px; width: 158px; font-size: 12.500px; }
.td .ret { margin-left: -1px; }
.big { padding-left: 8px; }
.bul { display: flex; align-items: center; height: 24px; padding-left: 28px; gap: 16px; }
.bul i { width: 8px; height: 8px; background: #000; }
.r2 { height: 22px; display: flex; align-items: center; margin-left: -1px; }
.inner { border: solid #000; border-width: 1px 0 0 1px; width: 600px; }
.ir { height: 24px; box-sizing: border-box; border-bottom: 1px solid #000; display: flex; }
.ir + .ir { height: 23px; }
.ic { width: 292px; border-right: 1px solid #000; display: flex; align-items: center; justify-content: center; padding: 2px 0 0 11px; box-sizing: border-box; font-size: 12.500px; }
.r3 { height: 24px; display: flex; align-items: center; margin-left: -1px; }
.wstatus { height: 21px; flex: none; color: #333; display: flex; align-items: center; }

.run { position: absolute; left: 22px; top: 827px; width: 383px; height: 196px; box-sizing: border-box; border: 1px solid rgba(128,128,128,.05); box-shadow: 0 0 14px rgba(0,0,0,.09); }
.run header { height: 27px; background: rgba(255,255,255,.18); border-top: 1px solid rgba(150,150,150,.15); display: flex; align-items: center; padding: 0 9px 0 8px; gap: 6px; color: #666; }
.run header > * { margin-bottom: 2px; }
.run .rx { margin-left: auto; }

.exp { position: absolute; left: 788px; top: 250px; width: 1119px; height: 741px; box-sizing: border-box; border: solid #2c2c2c; border-width: 0 1px 1px 1px; background: #191919; display: flex; flex-direction: column; box-shadow: 0 0 14px rgba(0,0,0,.4); color: #ececec; }
.etitle { height: 31px; background: #2b2b2b; display: flex; align-items: center; padding-left: 7px; flex: none; color: #8f8f8f; }
.bar { width: 1px; height: 11px; border: solid #666; border-width: 0 1px; margin: 0 6px 0 7px; }
.etitle .ico + .ico { margin-left: 6px; }
.etitle .bar + .t { margin-left: -1px; }
.etitle > svg:not(.ico):not(.ectl) { margin-left: 7px; }
.ectl { margin: 0 17px 0 auto; }
.etabs { height: 24px; background: #000; display: flex; align-items: center; flex: none; }
.file { width: 56px; height: 23px; background: #0063b1; display: flex; align-items: center; justify-content: center; align-self: flex-start; margin-right: 14px; }
.etabs > .t { margin-right: 29px; }
.etabs svg { margin-left: auto; margin-right: -3px; }
.eaddr { height: 43px; display: flex; flex: none; padding-top: 6px; box-sizing: border-box; }
.arr { margin: 8px 0 0 12px; }
.abox, .sbox { height: 30px; box-sizing: border-box; border: 1px solid #535353; display: flex; align-items: center; }
.abox { width: 794px; margin-left: 6px; padding-left: 1px; }
.abox > svg:nth-child(2) { margin: 0 10px 0 7px; }
.abox .rf { margin-left: auto; margin-right: 7px; }
.sbox { width: 193px; margin-left: 12px; padding-left: 14px; gap: 13px; color: #7a7a7a; }
.ebody { flex: 1; display: flex; }
aside { width: 158px; padding-top: 16px; border-right: 1px solid #2c2c2c; flex: none; box-sizing: content-box; }
.ng { margin-bottom: 8px; }
.nr { height: 24px; display: flex; align-items: center; padding-left: 24px; gap: 5px; width: 130px; }
.nr.child { padding-left: 32px; width: 122px; }
.sel { background: linear-gradient(#333, #333) 1px 1px / 154px 22px no-repeat; }
.pinned { margin-left: auto; }
main { flex: 1; background: #202020; }
.hd { display: flex; height: 24px; margin-bottom: 7px; }
.hd > div { width: 143px; border-right: 1px solid #636363; padding: 3px 0 0 6px; box-sizing: border-box; color: #dedede; position: relative; }
.hd .h1 { width: 273px; padding-left: 18px; }
.hd > div:nth-child(2) { width: 144px; } .hd > div:nth-child(3) { width: 120px; } .hd > div:nth-child(4) { width: 80px; }
.sort { position: absolute; left: 138px; top: 0; }
.fr { display: flex; height: 21px; align-items: center; padding-left: 19px; }
.nm { width: 260px; display: flex; align-items: center; gap: 4px; }
.g { width: 144px; color: #dedede; } .g:nth-child(3) { width: 120px; } .g.sz { width: 66px; text-align: right; }
.est { height: 23px; background: #333; display: flex; align-items: center; padding-left: 14px; flex: none; }
.est i { width: 1px; height: 11px; background: #fff; margin-left: 10px; }
.est svg { margin-left: auto; margin-right: 5px; }

.osd { position: absolute; left: 1610px; top: 950px; width: 300px; height: 80px; border-radius: 10px; background: rgba(0,0,0,.72); display: grid; grid-template-columns: 90px 1fr; grid-template-rows: 30px 30px; column-gap: 10px; padding-top: 11px; box-sizing: border-box; align-items: center; color: #f4f4f4; }
.osd .k { text-align: right; }
.osd b { font-weight: 700; color: #fff; }

.task { position: absolute; left: 0; top: 1040px; width: 1920px; height: 40px; background: #1d1d1d; display: flex; gap: 1px; }
.tb { width: 48px; height: 40px; display: flex; align-items: center; justify-content: center; box-sizing: border-box; flex: none; }
.tb:first-child { margin-right: -1px; }
.tb.multi { margin-left: 2px; }
.tb.on { background: linear-gradient(#76b9ed, #76b9ed) 4px 38px / 40px 2px no-repeat; }
.tb.multi { background: linear-gradient(90deg, #76b9ed 32px, #4c7ba4 32px) 4px 38px / 40px 2px no-repeat; }
.tb.cur { background: linear-gradient(#ff7a10, #ff7a10) 0 38px / 48px 2px no-repeat, #a55e27; }
.tray { margin-left: auto; display: flex; align-items: center; }
.tray > svg { margin-right: 8px; }
.tray > svg:first-child { margin-right: 10px; }
.ime { font-size: 19px; width: 13px; }
.clock { width: 66px; margin-left: 12px; display: flex; flex-direction: column; align-items: center; color: #f0f0f0; }
.tray .noti { margin: 2px 0 0 19px; }
.edge { width: 1px; height: 40px; background: #666; margin: 0 4px 0 10px; }
</style>
